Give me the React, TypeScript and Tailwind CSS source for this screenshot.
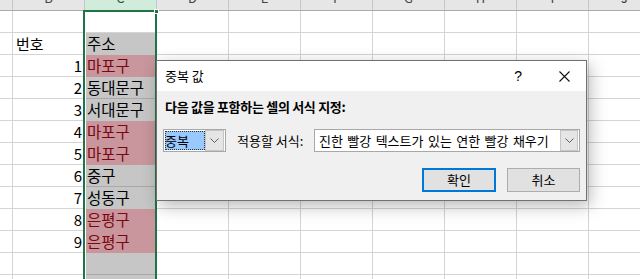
import React from "react";

type Row = { b: string; c: string; fill: "w" | "g" | "p" };

const rows: Row[] = [
  { b: "", c: "", fill: "w" },
  { b: "번호", c: "주소", fill: "g" },
  { b: "1", c: "마포구", fill: "p" },
  { b: "2", c: "동대문구", fill: "g" },
  { b: "3", c: "서대문구", fill: "g" },
  { b: "4", c: "마포구", fill: "p" },
  { b: "5", c: "마포구", fill: "p" },
  { b: "6", c: "중구", fill: "g" },
  { b: "7", c: "성동구", fill: "g" },
  { b: "8", c: "은평구", fill: "p" },
  { b: "9", c: "은평구", fill: "p" },
  { b: "", c: "", fill: "g" },
  { b: "", c: "", fill: "g" },
];

const headers = ["B", "C", "D", "E", "F", "G", "H", "I", "J"];

function Chevron() {
  return (
    <svg width="9" height="5" viewBox="0 0 9 5" fill="none">
      <path d="M0.5 0.5 L4.5 4.5 L8.5 0.5" stroke="#606060" strokeWidth="1" />
    </svg>
  );
}

export default function App() {
  return (
    <div className="relative w-[640px] h-[279px] overflow-hidden bg-white font-['Noto_Sans_CJK_KR',sans-serif] text-black">
      {/* column header */}
      <div className="flex -mt-[10px] h-[21px] bg-[#e6e6e6] border-b border-[#ababab]">
        <div className="w-[13px] shrink-0 border-r border-[#c6c6c6]" />
        {headers.map((h, i) => (
          <div
            key={h}
            className={
              i === 1
                ? "w-[72px] shrink-0 border-r border-[#c6c6c6] bg-[#d2ecdc] flex items-start justify-center pt-[1px] text-[13px] leading-none text-[#1e5f3a]"
                : "w-[72px] shrink-0 border-r border-[#c6c6c6] flex items-start justify-center pt-[1px] text-[13px] leading-none text-[#444]"
            }
          >
            {h}
          </div>
        ))}
      </div>

      {/* rows */}
      {rows.map((r, idx) => {
        const next = rows[idx + 1];
        const cBorder =
          r.fill === "p"
            ? "border-b border-transparent"
            : r.fill === "g" && next && next.fill === "p"
            ? "border-b border-transparent"
            : r.fill === "g"
            ? "border-b border-[#a9a9a9]"
            : "border-b border-[#d4d4d4]";
        const cBg =
          r.fill === "p" ? "bg-[#c8969c]" : r.fill === "g" ? "bg-[#c6c6c6]" : "bg-white";
        return (
          <div key={idx} className="flex h-[22px]">
            <div className="w-[13px] shrink-0 border-r border-b border-[#d4d4d4]" />
            <div
              className={
                /^\d+$/.test(r.b)
                  ? "w-[72px] shrink-0 border-r border-b border-[#d4d4d4] flex items-center justify-end pr-[2px] text-[15px] leading-[21px]"
                  : "w-[72px] shrink-0 border-r border-b border-[#d4d4d4] flex items-center pl-[3px] text-[15px] leading-[21px]"
              }
            >
              {r.b}
            </div>
            <div className="w-[72px] shrink-0 pl-[1px]">
              <div
                className={
                  cBg +
                  " h-[22px] " +
                  cBorder +
                  (r.fill === "p"
                    ? " text-[#7c0610] flex items-center pl-[1px] text-[15.5px] leading-[21px]"
                    : " flex items-center pl-[1px] text-[15.5px] leading-[21px]")
                }
              >
                {r.c}
              </div>
            </div>
            {headers.slice(2).map((h) => (
              <div key={h} className="w-[72px] shrink-0 border-r border-b border-[#d4d4d4]" />
            ))}
          </div>
        );
      })}

      {/* selection overlay */}
      <div className="absolute left-[83px] top-[10px] w-[74px] h-[290px] border-2 border-[#217346] pointer-events-none" />
      <div className="absolute left-[154px] top-[9px] w-[5px] h-[5px] bg-[#217346] border border-white" />

      {/* dialog */}
      <div className="absolute left-[156px] top-[60px] w-[431px] h-[141px] border border-[#717171] bg-[#f0f0f0] shadow-[3px_5px_16px_rgba(0,0,0,0.28)] text-[13px] text-black">
        <div className="h-[30px] bg-white flex items-center pl-[8px] pr-[12px]">
          <span className="leading-[16px]">중복 값</span>
          <span className="ml-auto mr-[37px] text-[14px] leading-[16px] font-['Liberation_Sans',sans-serif]">?</span>
          <svg width="11" height="11" viewBox="0 0 11 11" className="mr-[4px]">
            <path d="M0.5 0.5 L10.5 10.5 M10.5 0.5 L0.5 10.5" stroke="#111" strokeWidth="1.1" />
          </svg>
        </div>
        <div className="px-[6px] pt-[8px]">
          <div className="pl-[2px] font-bold leading-[16px] tracking-[-0.3px]">다음 값을 포함하는 셀의 서식 지정:</div>
          <div className="mt-[14px] flex items-center h-[23px]">
            <div className="w-[63px] h-[23px] border border-[#a8a8a8] bg-white flex items-center p-[1px]">
              <div className="h-[19px] w-[41px] bg-[#99c9ff] border border-dotted border-[#333] flex items-center leading-none">
                <span className="-ml-[1px]">중복</span>
              </div>
              <div className="ml-auto h-[21px] w-[19px] bg-[#e5e5e5] border border-[#c5c5c5] flex items-center justify-center">
                <Chevron />
              </div>
            </div>
            <span className="ml-[11px] leading-[16px]">적용할 서식:</span>
            <div className="ml-auto w-[266px] h-[23px] border border-[#a8a8a8] bg-white flex items-center pl-[4px] pr-[1px]">
              <span className="leading-[16px] [word-spacing:1.5px]">진한 빨강 텍스트가 있는 연한 빨강 채우기</span>
              <div className="ml-auto h-[21px] w-[18px] bg-[#e5e5e5] border border-[#c5c5c5] flex items-center justify-center">
                <Chevron />
              </div>
            </div>
          </div>
          <div className="mt-[16px] flex justify-end gap-[11px]">
            <div className="w-[74px] h-[24px] border-2 border-[#0078d7] bg-[#e1e1e1] flex items-center justify-center leading-[16px]">
              확인
            </div>
            <div className="w-[73px] h-[24px] border border-[#adadad] bg-[#e1e1e1] flex items-center justify-center leading-[16px]">
              취소
            </div>
          </div>
        </div>
      </div>
    </div>
  );
}
